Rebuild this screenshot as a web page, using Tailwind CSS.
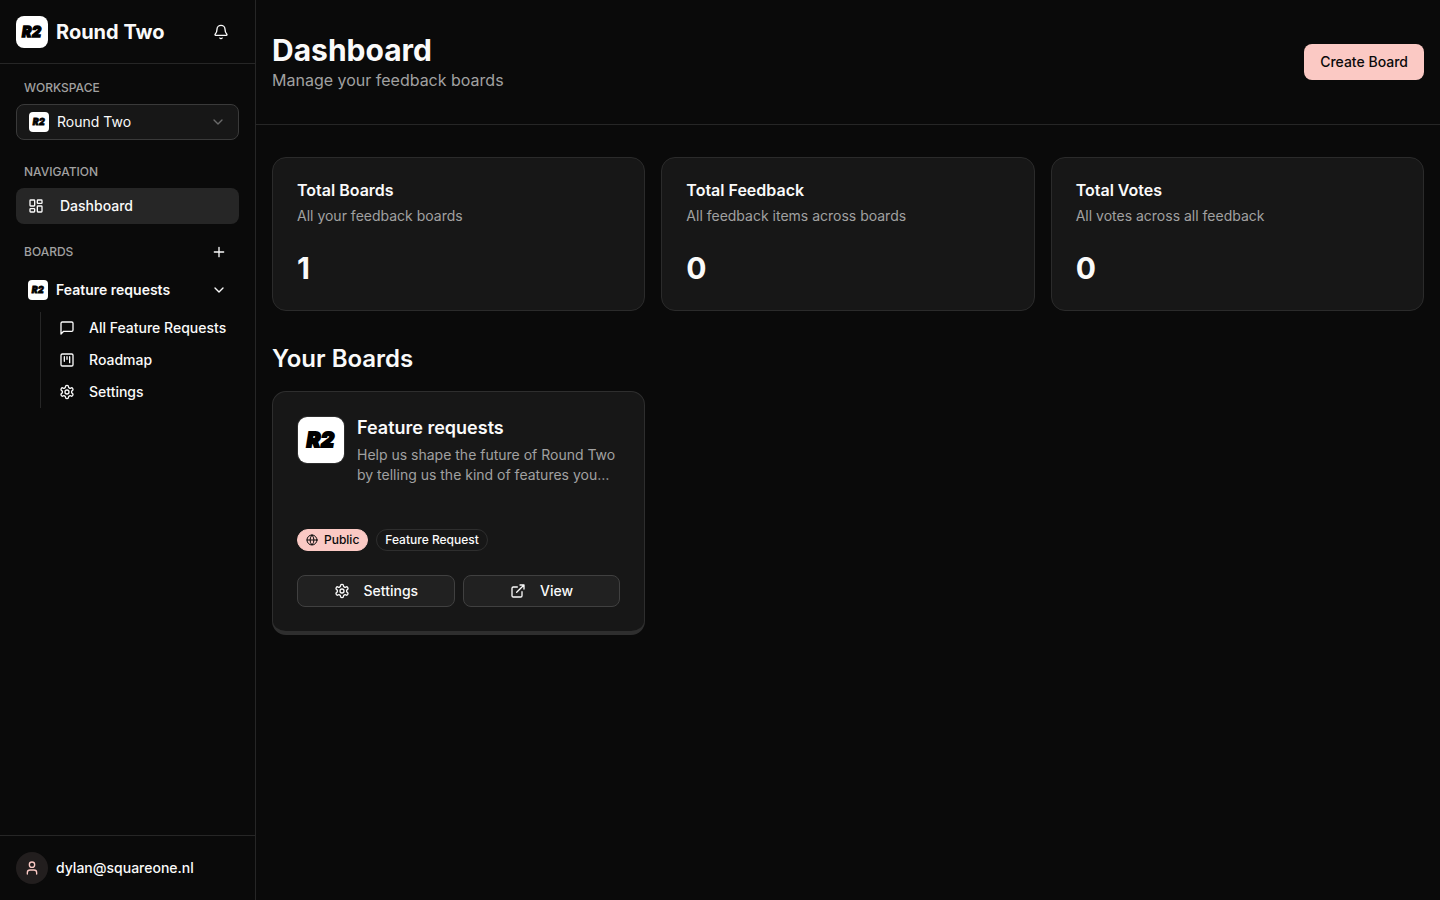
<!DOCTYPE html>
<html lang="en">
<head>
  <meta charset="utf-8">
  <meta name="viewport" content="width=device-width, initial-scale=1">
  <title>Dashboard - Round Two</title>
  <script src="https://cdn.jsdelivr.net/npm/@tailwindcss/browser@4"></script>
</head>
<body class="bg-[#0a0a0a] font-['Inter',sans-serif] text-sm text-neutral-50 antialiased">
  <!-- icon sprite -->
  <svg class="hidden" aria-hidden="true">
    <symbol id="logo" viewBox="0 0 32 32">
      <rect width="32" height="32" fill="#fff" />
      <text x="6 16" y="21" font-family="Inter, sans-serif" font-size="14" font-weight="900" font-style="italic" fill="#000" stroke="#000" stroke-width="1.3">R2</text>
    </symbol>
    <symbol id="settings" viewBox="0 0 24 24">
      <path d="M12.22 2h-.44a2 2 0 0 0-2 2v.18a2 2 0 0 1-1 1.73l-.43.25a2 2 0 0 1-2 0l-.15-.08a2 2 0 0 0-2.73.73l-.22.38a2 2 0 0 0 .73 2.73l.15.1a2 2 0 0 1 1 1.72v.51a2 2 0 0 1-1 1.74l-.15.09a2 2 0 0 0-.73 2.73l.22.38a2 2 0 0 0 2.73.73l.15-.08a2 2 0 0 1 2 0l.43.25a2 2 0 0 1 1 1.73V20a2 2 0 0 0 2 2h.44a2 2 0 0 0 2-2v-.18a2 2 0 0 1 1-1.73l.43-.25a2 2 0 0 1 2 0l.15.08a2 2 0 0 0 2.73-.73l.22-.39a2 2 0 0 0-.73-2.73l-.15-.08a2 2 0 0 1-1-1.74v-.5a2 2 0 0 1 1-1.74l.15-.09a2 2 0 0 0 .73-2.73l-.22-.38a2 2 0 0 0-2.73-.73l-.15.08a2 2 0 0 1-2 0l-.43-.25a2 2 0 0 1-1-1.73V4a2 2 0 0 0-2-2z" />
      <circle cx="12" cy="12" r="3" />
    </symbol>
    <symbol id="chevron-down" viewBox="0 0 24 24">
      <path d="m6 9 6 6 6-6" />
    </symbol>
  </svg>

  <div class="flex min-h-screen">
    <aside class="flex w-64 shrink-0 flex-col border-r border-[#262626]">
      <div class="flex h-16 items-center justify-between border-b border-[#262626] px-4">
        <a href="#" class="flex items-center gap-2">
          <svg class="size-8 rounded-lg" aria-hidden="true"><use href="#logo" /></svg>
          <span class="text-xl font-bold">Round Two</span>
        </a>
        <button type="button" class="flex size-9 items-center justify-center rounded-lg" aria-label="Notifications">
          <svg class="size-4" fill="none" viewBox="0 0 24 24" stroke-width="2" stroke="currentColor" stroke-linecap="round" stroke-linejoin="round" aria-hidden="true">
            <path d="M10.268 21a2 2 0 0 0 3.464 0" />
            <path d="M3.262 15.326A1 1 0 0 0 4 17h16a1 1 0 0 0 .74-1.673C19.41 13.956 18 12.499 18 8A6 6 0 0 0 6 8c0 4.499-1.411 5.956-2.738 7.326" />
          </svg>
        </button>
      </div>

      <div class="flex-1 p-4">
        <label for="workspace" class="block px-2 text-xs font-medium text-neutral-400">WORKSPACE</label>
        <div class="mt-2 flex h-9 items-center gap-2 rounded-lg border border-[#3a3a3a] bg-[#171717] px-3">
          <svg class="size-5 shrink-0 rounded-sm" aria-hidden="true"><use href="#logo" /></svg>
          <select id="workspace" class="min-w-0 flex-1 appearance-none bg-transparent text-sm outline-none">
            <option>Round Two</option>
          </select>
          <svg class="size-4 shrink-0 text-[#6a6a6a]" fill="none" stroke-width="2" stroke="currentColor" stroke-linecap="round" stroke-linejoin="round" aria-hidden="true"><use href="#chevron-down" /></svg>
        </div>

        <nav class="mt-6" aria-label="Main">
          <h2 class="px-2 text-xs font-medium text-neutral-400">NAVIGATION</h2>
          <a href="#" class="mt-2 flex h-9 items-center gap-4 rounded-lg bg-[#262626] px-3 font-medium" aria-current="page">
            <svg class="size-4" fill="none" viewBox="0 0 24 24" stroke-width="2" stroke="currentColor" stroke-linecap="round" stroke-linejoin="round" aria-hidden="true">
              <rect width="7" height="9" x="3" y="3" rx="1" />
              <rect width="7" height="5" x="14" y="3" rx="1" />
              <rect width="7" height="9" x="14" y="12" rx="1" />
              <rect width="7" height="5" x="3" y="16" rx="1" />
            </svg>
            Dashboard
          </a>
        </nav>

        <nav class="mt-4" aria-label="Boards">
          <div class="flex items-center justify-between px-2">
            <h2 class="text-xs font-medium text-neutral-400">BOARDS</h2>
            <button type="button" class="flex size-6 items-center justify-center rounded-md" aria-label="Add board">
              <svg class="size-4" fill="none" viewBox="0 0 24 24" stroke-width="2" stroke="currentColor" stroke-linecap="round" stroke-linejoin="round" aria-hidden="true">
                <path d="M5 12h14M12 5v14" />
              </svg>
            </button>
          </div>
          <button type="button" class="mt-2 flex h-9 w-full items-center gap-2 px-3 font-semibold" aria-expanded="true">
            <svg class="size-5 rounded-sm" aria-hidden="true"><use href="#logo" /></svg>
            Feature requests
            <svg class="ml-auto size-4" fill="none" stroke-width="2" stroke="currentColor" stroke-linecap="round" stroke-linejoin="round" aria-hidden="true"><use href="#chevron-down" /></svg>
          </button>
          <ul class="mt-1 ml-6 border-l border-[#262626] pl-2 font-medium">
            <li>
              <a href="#" class="flex h-8 items-center gap-3.5 pl-2.5 whitespace-nowrap">
                <svg class="size-4" fill="none" viewBox="0 0 24 24" stroke-width="2" stroke="currentColor" stroke-linecap="round" stroke-linejoin="round" aria-hidden="true">
                  <path d="M21 15a2 2 0 0 1-2 2H7l-4 4V5a2 2 0 0 1 2-2h14a2 2 0 0 1 2 2z" />
                </svg>
                All Feature Requests
              </a>
            </li>
            <li>
              <a href="#" class="flex h-8 items-center gap-3.5 pl-2.5">
                <svg class="size-4" fill="none" viewBox="0 0 24 24" stroke-width="2" stroke="currentColor" stroke-linecap="round" stroke-linejoin="round" aria-hidden="true">
                  <rect width="18" height="18" x="3" y="3" rx="2" />
                  <path d="M8 7v7M12 7v4M16 7v9" />
                </svg>
                Roadmap
              </a>
            </li>
            <li>
              <a href="#" class="flex h-8 items-center gap-3.5 pl-2.5">
                <svg class="size-4" fill="none" stroke-width="2" stroke="currentColor" stroke-linecap="round" stroke-linejoin="round" aria-hidden="true"><use href="#settings" /></svg>
                Settings
              </a>
            </li>
          </ul>
        </nav>
      </div>

      <div class="border-t border-[#262626] p-4">
        <button type="button" class="flex items-center gap-2 font-medium">
          <span class="flex size-8 items-center justify-center rounded-full bg-[#221e1e] text-[#fbc9c4]">
            <svg class="size-4" fill="none" viewBox="0 0 24 24" stroke-width="2" stroke="currentColor" stroke-linecap="round" stroke-linejoin="round" aria-hidden="true">
              <path d="M19 21v-2a4 4 0 0 0-4-4H9a4 4 0 0 0-4 4v2" />
              <circle cx="12" cy="7" r="4" />
            </svg>
          </span>
          dylan@squareone.nl
        </button>
      </div>
    </aside>

    <main class="min-w-0 flex-1">
      <header class="flex items-center justify-between border-b border-[#262626] px-4 py-8">
        <div>
          <h1 class="text-3xl font-bold">Dashboard</h1>
          <p class="text-base text-neutral-400">Manage your feedback boards</p>
        </div>
        <button type="button" class="h-9 rounded-lg bg-[#fbc9c4] px-4 font-medium text-[#0a0a0a]">Create Board</button>
      </header>

      <div class="px-4 py-8">
        <div class="grid grid-cols-3 gap-4">
          <section class="rounded-[14px] border border-[#2b2b2b] bg-[#171717] p-6">
            <h3 class="text-base/4 font-semibold">Total Boards</h3>
            <p class="mt-2 text-neutral-400">All your feedback boards</p>
            <p class="mt-6 text-3xl font-bold">1</p>
          </section>
          <section class="rounded-[14px] border border-[#2b2b2b] bg-[#171717] p-6">
            <h3 class="text-base/4 font-semibold">Total Feedback</h3>
            <p class="mt-2 text-neutral-400">All feedback items across boards</p>
            <p class="mt-6 text-3xl font-bold">0</p>
          </section>
          <section class="rounded-[14px] border border-[#2b2b2b] bg-[#171717] p-6">
            <h3 class="text-base/4 font-semibold">Total Votes</h3>
            <p class="mt-2 text-neutral-400">All votes across all feedback</p>
            <p class="mt-6 text-3xl font-bold">0</p>
          </section>
        </div>

        <h2 class="mt-8 text-2xl font-semibold">Your Boards</h2>
        <div class="mt-4 grid grid-cols-3 gap-4">
          <article class="rounded-[14px] border border-b-4 border-[#2e2e2e] bg-[#171717] p-6">
            <div class="flex gap-3">
              <svg class="size-12 shrink-0 rounded-[10px] border border-[#2e2e2e]" aria-hidden="true"><use href="#logo" /></svg>
              <div>
                <h3 class="text-lg/[23px] font-semibold">Feature requests</h3>
                <p class="mt-1.5 text-neutral-400">Help us shape the future of Round Two by telling us the kind of features you…</p>
              </div>
            </div>
            <div class="mt-11 flex gap-2 text-xs font-medium">
              <span class="flex items-center gap-1.5 rounded-full border border-[#fbc9c4] bg-[#fbc9c4] px-2 py-0.5 text-[#0a0a0a]">
                <svg class="size-3" fill="none" viewBox="0 0 24 24" stroke-width="2" stroke="currentColor" stroke-linecap="round" stroke-linejoin="round" aria-hidden="true">
                  <circle cx="12" cy="12" r="10" />
                  <path d="M12 2a14.5 14.5 0 0 0 0 20 14.5 14.5 0 0 0 0-20" />
                  <path d="M2 12h20" />
                </svg>
                Public
              </span>
              <span class="rounded-full border border-[#2e2e2e] px-2 py-0.5">Feature Request</span>
            </div>
            <div class="mt-6 grid grid-cols-2 gap-2 font-medium">
              <a href="#" class="flex h-8 items-center justify-center gap-3.5 rounded-lg border border-[#404040] bg-[#212121]">
                <svg class="size-4" fill="none" stroke-width="2" stroke="currentColor" stroke-linecap="round" stroke-linejoin="round" aria-hidden="true"><use href="#settings" /></svg>
                Settings
              </a>
              <a href="#" class="flex h-8 items-center justify-center gap-3.5 rounded-lg border border-[#404040] bg-[#212121]">
                <svg class="size-4" fill="none" viewBox="0 0 24 24" stroke-width="2" stroke="currentColor" stroke-linecap="round" stroke-linejoin="round" aria-hidden="true">
                  <path d="M15 3h6v6M10 14 21 3" />
                  <path d="M18 13v6a2 2 0 0 1-2 2H5a2 2 0 0 1-2-2V8a2 2 0 0 1 2-2h6" />
                </svg>
                View
              </a>
            </div>
          </article>
        </div>
      </div>
    </main>
  </div>
</body>
</html>
